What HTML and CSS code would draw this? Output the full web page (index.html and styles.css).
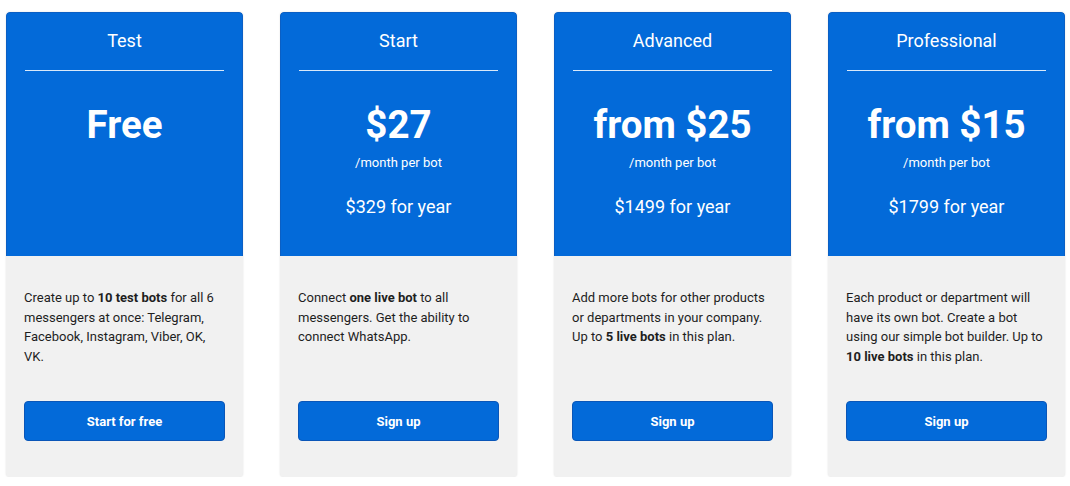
FILE: index.html
```html
<!DOCTYPE html>
<html lang="en">
<head>
<meta charset="utf-8">
<title>Pricing</title>
<link rel="stylesheet" href="styles.css">
</head>
<body>
<div class="plans">
  <div class="card">
    <div class="head">
      <div class="name">Test</div>
      <div class="price">Free</div>
    </div>
    <div class="body">
      <p class="desc">Create up to <b>10 test bots</b> for all 6 messengers at once: Telegram, Facebook, Instagram, Viber, OK, VK.</p>
      <a class="btn" href="#">Start for free</a>
    </div>
  </div>
  <div class="card">
    <div class="head">
      <div class="name">Start</div>
      <div class="price">$27</div>
      <div class="per">/month per bot</div>
      <div class="year">$329 for year</div>
    </div>
    <div class="body">
      <p class="desc">Connect <b>one live bot</b> to all messengers. Get the ability to connect WhatsApp.</p>
      <a class="btn" href="#">Sign up</a>
    </div>
  </div>
  <div class="card">
    <div class="head">
      <div class="name">Advanced</div>
      <div class="price">from $25</div>
      <div class="per">/month per bot</div>
      <div class="year">$1499 for year</div>
    </div>
    <div class="body">
      <p class="desc">Add more bots for other products or departments in your company. Up to <b>5 live bots</b> in this plan.</p>
      <a class="btn" href="#">Sign up</a>
    </div>
  </div>
  <div class="card">
    <div class="head">
      <div class="name">Professional</div>
      <div class="price">from $15</div>
      <div class="per">/month per bot</div>
      <div class="year">$1799 for year</div>
    </div>
    <div class="body">
      <p class="desc">Each product or department will have its own bot. Create a bot using our simple bot builder. Up to <b>10 live bots</b> in this plan.</p>
      <a class="btn" href="#">Sign up</a>
    </div>
  </div>
</div>
</body>
</html>
```

FILE: styles.css
```css
* { box-sizing: border-box; }
html, body { margin: 0; padding: 0; background: #fff; }
body {
  font-family: Roboto, "Liberation Sans", Arial, sans-serif;
  color: #1e1e1e;
}
.plans {
  display: grid;
  grid-template-columns: repeat(4, 237px);
  column-gap: 37px;
  padding: 12px 0 0 6px;
}
.card {
  display: flex;
  flex-direction: column;
  border-radius: 4px;
  overflow: hidden;
  background: #f1f1f1;
  box-shadow: 0 0 2px rgba(0,0,0,0.12);
}
.head {
  height: 244px;
  background: #036ad9;
  color: #fff;
  padding: 16px 18px 0;
  text-align: center;
  border: 1px solid #0b5fc4;
  border-bottom: none;
  border-radius: 4px 4px 0 0;
}
.name {
  font-size: 18px;
  line-height: 24px;
  padding-bottom: 17px;
  border-bottom: 1px solid rgba(255,255,255,0.85);
}
.price {
  margin-top: 32px;
  font-size: 38.5px;
  line-height: 44px;
  font-weight: 700;
}
.per {
  margin-top: 7px;
  font-size: 13px;
  line-height: 18px;
}
.year {
  margin-top: 23px;
  font-size: 18px;
  line-height: 24px;
}
.body {
  flex: 1;
  display: flex;
  flex-direction: column;
  padding: 32px 18px 36px;
}
.desc {
  margin: 0 0 35px;
  font-size: 13px;
  line-height: 19.5px;
  min-height: 78px;
}
.desc b { font-weight: 700; }
.btn {
  display: flex;
  align-items: center;
  justify-content: center;
  height: 40px;
  background: #036ad9;
  border: 1px solid #0a56b8;
  border-radius: 4px;
  color: #fff;
  font-size: 13px;
  font-weight: 700;
  text-decoration: none;
}
```
